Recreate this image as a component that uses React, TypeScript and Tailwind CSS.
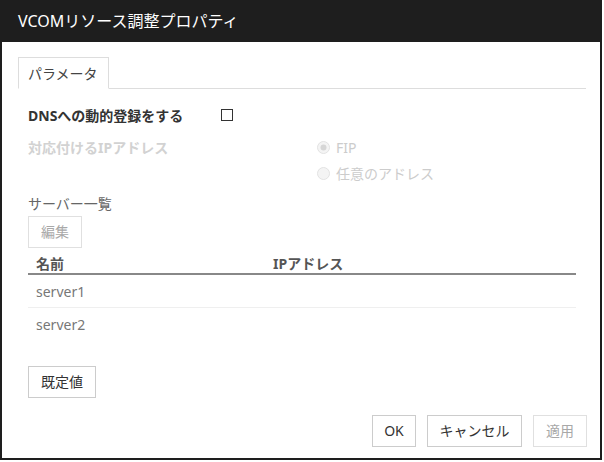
import type { ReactNode } from "react"

const FONT = { fontFamily: '"Noto Sans", "Noto Sans CJK JP", sans-serif' }

function Btn({ children, w, muted }: { children: ReactNode; w: string; muted?: boolean }) {
  return (
    <div
      className={`flex h-[32px] items-center justify-center border bg-white text-[14px] leading-none ${w} ${
        muted ? "border-[#e0e0e0] text-[#a8a8a8]" : "border-[#cccccc] text-[#333]"
      }`}
    >
      {children}
    </div>
  )
}

function Radio({ checked }: { checked?: boolean }) {
  return (
    <svg width="13" height="13" viewBox="0 0 13 13" className="shrink-0">
      <circle cx="6.5" cy="6.5" r="6" fill="#f4f4f4" stroke="#e2e2e2" />
      {checked && <circle cx="6.5" cy="6.5" r="3" fill="#d6d6d6" />}
    </svg>
  )
}

export default function App() {
  return (
    <div style={FONT} className="h-[460px] w-[602px] border-2 border-t-0 border-[#1e1e1e] bg-white">
      <div className="flex h-[42px] items-center bg-[#1e1e1e] pl-4 text-[16px] leading-none text-white">
        VCOMリソース調整プロパティ
      </div>

      <div className="pl-4 pr-[14px] pt-[15px]">
        {/* tabs */}
        <div className="flex border-b border-[#dddddd]">
          <div className="-mb-px flex h-[32px] w-[91px] items-center border border-b-white border-[#dddddd] bg-white pl-[9px] text-[14px] text-[#444]">
            パラメータ
          </div>
        </div>

        <div className="pl-[10px]">
          <div className="mt-[16px] flex h-[20px] items-center">
            <span className="w-[193px] text-[14px] font-bold text-[#333]">DNSへの動的登録をする</span>
            <span className="h-[12px] w-[12px] border-[1.5px] border-[#333]" />
          </div>

          <div className="mt-[12px] flex h-[20px] items-center">
            <span className="w-[289px] text-[14px] font-bold text-[#d2d2d2]">対応付けるIPアドレス</span>
            <Radio checked />
            <span className="ml-[6px] text-[14px] text-[#cccccc]">FIP</span>
          </div>
          <div className="mt-[6px] flex h-[20px] items-center pl-[289px]">
            <Radio />
            <span className="ml-[6px] text-[14px] text-[#cccccc]">任意のアドレス</span>
          </div>

          <div className="mt-[10px] flex h-[20px] items-center text-[14px] text-[#666]">サーバー一覧</div>
          <div className="mt-[3px]">
            <Btn w="w-[54px]" muted>
              編集
            </Btn>
          </div>

          <div className="w-[548px]">
            <div className="flex h-[27px] items-center border-b-2 border-[#888] pt-[5px] text-[14px] font-bold text-[#555]">
              <span className="w-[245px] pl-[8px]">名前</span>
              <span>IPアドレス</span>
            </div>
            <div className="flex h-[33px] items-center border-b border-[#efefef] pl-[8px] text-[14px] text-[#777]">
              server1
            </div>
            <div className="flex h-[33px] items-center pl-[8px] text-[14px] text-[#777]">server2</div>
          </div>

          <div className="mt-[25px]">
            <Btn w="w-[68px]">既定値</Btn>
          </div>
        </div>

        <div className="-mr-px mt-[17px] flex justify-end gap-[11px]">
          <Btn w="w-[44px]">OK</Btn>
          <Btn w="w-[95px]">キャンセル</Btn>
          <Btn w="w-[54px]" muted>
            適用
          </Btn>
        </div>
      </div>
    </div>
  )
}
